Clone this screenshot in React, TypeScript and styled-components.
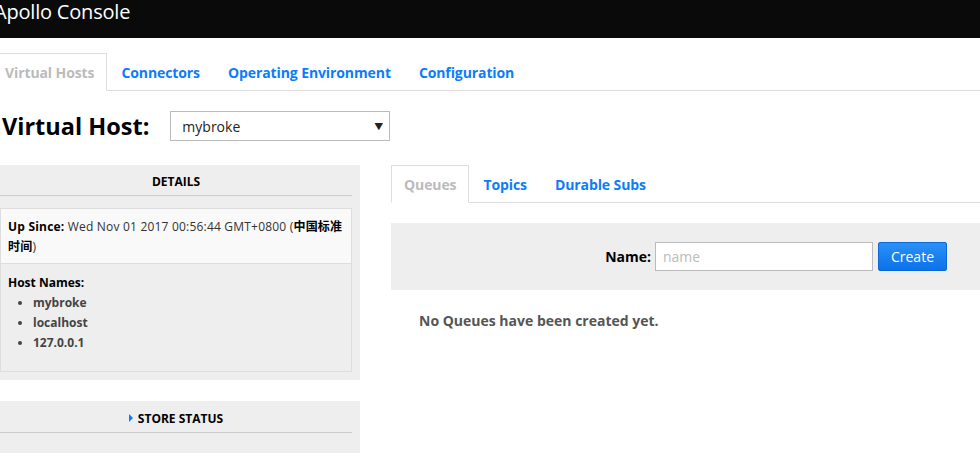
import { createGlobalStyle } from "styled-components";
import styled from "styled-components";

const GlobalStyle = createGlobalStyle`
  html, body {
    margin: 0;
    padding: 0;
    background: #fff;
    overflow: hidden;
  }
  body {
    font-family: "Open Sans", "Noto Sans CJK SC", sans-serif;
    color: #333;
  }
`;

const Page = styled.div`
  width: 1010px;
  margin-left: -8px;
`;

const Header = styled.header`
  height: 38px;
  background: #0a0a0a;
  color: #fff;
  font-size: 20px;
  line-height: 24px;
  padding-left: 2px;
  letter-spacing: -0.2px;
`;

const TabBar = styled.ul<{ $top: number }>`
  list-style: none;
  margin: ${({ $top }) => $top}px 0 0 0;
  padding: 0;
  display: flex;
  border-bottom: 1px solid #ddd;
`;

const Tab = styled.li<{ $active?: boolean }>`
  height: 36px;
  padding: 0 ${({ $active }) => ($active ? 12 : 13)}px;
  margin-bottom: -1px;
  display: flex;
  align-items: center;
  font-size: 14px;
  font-weight: 700;
  letter-spacing: -0.1px;
  color: ${({ $active }) => ($active ? "#bbb" : "#0b7cfa")};
  border: 1px solid ${({ $active }) => ($active ? "#ddd" : "transparent")};
  border-bottom-color: ${({ $active }) => ($active ? "#fff" : "transparent")};
  background: ${({ $active }) => ($active ? "#fff" : "transparent")};
`;

const HostRow = styled.div`
  display: flex;
  align-items: center;
  gap: 21px;
  margin: 20px 0 0 10px;
  height: 30px;
`;

const Title = styled.h1`
  margin: 0;
  font-size: 23.5px;
  font-weight: 700;
  color: #000;
`;

const Select = styled.div`
  width: 201px;
  height: 28px;
  border: 1px solid #bbb;
  display: flex;
  align-items: center;
  justify-content: space-between;
  padding: 0 6px 0 11px;
  font-size: 14px;
  color: #222;
`;

const Arrow = styled.span`
  font-size: 9px;
  color: #222;
`;

const Columns = styled.div`
  display: flex;
  margin-top: 24px;
`;

const LeftCol = styled.div`
  width: 368px;
  display: flex;
  flex-direction: column;
  gap: 21px;
`;

const RightCol = styled.div`
  flex: 1;
  margin-left: 31px;
`;

const Panel = styled.section`
  background: #eee;
  padding: 0 8px 8px 8px;
`;

const PanelHead = styled.div<{ $tall?: boolean }>`
  box-sizing: border-box;
  height: ${({ $tall }) => ($tall ? 32 : 31)}px;
  padding-top: 3px;
  border-bottom: 1px solid #ccc;
  display: flex;
  align-items: center;
  justify-content: center;
  gap: 5px;
  font-size: 12px;
  font-weight: 700;
  color: #000;
`;

const Caret = styled.span`
  width: 0;
  height: 0;
  border-left: 4px solid #0b7cfa;
  border-top: 4px solid transparent;
  border-bottom: 4px solid transparent;
`;

const Box = styled.div<{ $light?: boolean }>`
  border: 1px solid #ddd;
  border-top: ${({ $light }) => ($light ? "1px solid #ddd" : "none")};
  background: ${({ $light }) => ($light ? "#f9f9f9" : "#eee")};
  padding: ${({ $light }) => ($light ? "8px 8px 6px 7px" : "9px 8px 18px 7px")};
  font-size: 12px;
  line-height: 20px;
  letter-spacing: ${({ $light }) => ($light ? "0.2px" : "0")};
  color: #333;
`;

const Label = styled.span`
  font-weight: 700;
  color: #000;
`;

const List = styled.ul`
  margin: 0;
  padding-left: 25px;
  font-weight: 700;
  color: #444;
`;

const Spacer = styled.div`
  height: 12px;
`;

const CreateBar = styled.div`
  margin-top: 20px;
  height: 67px;
  background: #eee;
  display: flex;
  align-items: center;
  justify-content: flex-end;
  padding-right: 55px;
  gap: 4px;
`;

const NameLabel = styled.span`
  font-size: 14px;
  font-weight: 700;
  color: #000;
`;

const Input = styled.div`
  width: 209px;
  height: 27px;
  border: 1px solid #bbb;
  background: #fff;
  display: flex;
  align-items: center;
  padding-left: 7px;
  font-size: 14px;
  color: #bbb;
`;

const Button = styled.div`
  margin-left: 1px;
  width: 69px;
  height: 29px;
  box-sizing: border-box;
  border: 1px solid #0a68d8;
  border-radius: 2px;
  background: linear-gradient(#2b90f6, #0b72ea);
  color: #fff;
  font-size: 14px;
  display: flex;
  align-items: center;
  justify-content: center;
`;

const Empty = styled.p`
  margin: 21px 0 0 28px;
  font-size: 14px;
  font-weight: 700;
  color: #555;
`;

export default function App() {
  return (
    <Page>
      <GlobalStyle />
      <Header>Apollo Console</Header>
      <TabBar $top={15}>
        <Tab $active>Virtual Hosts</Tab>
        <Tab>Connectors</Tab>
        <Tab>Operating Environment</Tab>
        <Tab>Configuration</Tab>
      </TabBar>
      <HostRow>
        <Title>Virtual Host:</Title>
        <Select>
          <span>mybroke</span>
          <Arrow>▼</Arrow>
        </Select>
      </HostRow>
      <Columns>
        <LeftCol>
          <Panel>
            <PanelHead>DETAILS</PanelHead>
            <Spacer />
            <Box $light>
              <Label>Up Since:</Label> Wed Nov 01 2017 00:56:44 GMT+0800 (
              <Label>中国标准时间</Label>)
            </Box>
            <Box>
              <Label>Host Names:</Label>
              <List>
                <li>mybroke</li>
                <li>localhost</li>
                <li>127.0.0.1</li>
              </List>
            </Box>
          </Panel>
          <Panel>
            <PanelHead $tall>
              <Caret />
              STORE STATUS
            </PanelHead>
            <Spacer />
          </Panel>
        </LeftCol>
        <RightCol>
          <TabBar $top={0}>
            <Tab $active>Queues</Tab>
            <Tab>Topics</Tab>
            <Tab>Durable Subs</Tab>
          </TabBar>
          <CreateBar>
            <NameLabel>Name:</NameLabel>
            <Input>name</Input>
            <Button>Create</Button>
          </CreateBar>
          <Empty>No Queues have been created yet.</Empty>
        </RightCol>
      </Columns>
    </Page>
  );
}
